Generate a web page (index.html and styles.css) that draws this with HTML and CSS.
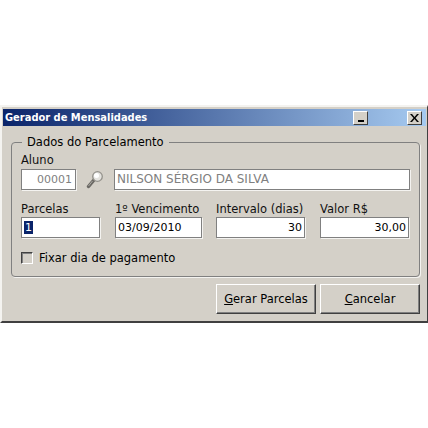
FILE: index.html
```html
<html>
    <head>
        <title>Gerador de Mensalidades</title>
        <link rel="stylesheet" href="styles.css">
    </head>
    <body>
        <div class="window">
            <div class="titlebar">
                <span class="title">Gerador de Mensalidades</span>
                <span class="winbtn minimize"><svg width="8" height="8" viewBox="0 0 8 8"><rect x="1" y="6" width="6" height="2" fill="#000"/></svg></span>
                <span class="winbtn close"><svg width="9" height="8" viewBox="0 0 9 8"><path d="M0 0h2l2.500 3 2.500-3h2l-3.500 4 3.500 4h-2l-2.500-3-2.500 3h-2l3.500-4z" fill="#000"/></svg></span>
            </div>
            <div class="content">
                <fieldset class="group">
                    <legend>Dados do Parcelamento</legend>
                    <div class="label">Aluno</div>
                    <div class="row-aluno">
                        <div class="input code disabled">00001</div>
                        <svg class="lupa" width="20" height="20" viewBox="0 0 20 20">
                            <path d="M3.500 16.500l5-6" stroke="#6a6864" stroke-width="3.500" stroke-linecap="round"/>
                            <path d="M3.500 16l4-5" stroke="#aaa8a2" stroke-width="1"/>
                            <circle cx="12.500" cy="6.500" r="4.800" fill="#e4e3df" stroke="#94928c" stroke-width="1.300"/>
                            <circle cx="11.500" cy="5.500" r="2.500" fill="#fff"/>
                        </svg>
                        <div class="input name disabled">NILSON SÉRGIO DA SILVA</div>
                    </div>
                    <div class="row-campos">
                        <div class="campo parcelas">
                            <div class="label">Parcelas</div>
                            <div class="input left"><span class="selected">1</span></div>
                        </div>
                        <div class="campo vencimento">
                            <div class="label">1º Vencimento</div>
                            <div class="input left">03/09/2010</div>
                        </div>
                        <div class="campo intervalo">
                            <div class="label">Intervalo (dias)</div>
                            <div class="input">30</div>
                        </div>
                        <div class="campo valor">
                            <div class="label">Valor R$</div>
                            <div class="input">30,00</div>
                        </div>
                    </div>
                    <div class="check">
                        <span class="box"></span>
                        <span class="check-text">Fixar dia de pagamento</span>
                    </div>
                </fieldset>
                <div class="buttons">
                    <div class="button"><span><u>G</u>erar Parcelas</span></div>
                    <div class="button"><span><u>C</u>ancelar</span></div>
                </div>
            </div>
        </div>
    </body>
</html>
```

FILE: styles.css
```css
body {
    background: #fff;
    color: #000;
    font-family: "DejaVu Sans", sans-serif;
    font-size: 11px;
    margin: 0;
    padding-top: 105px;
}

.window {
    background: #d4d0c8;
    border-bottom: 2px solid #404040;
    border-left: 2px solid #f4f3f0;
    border-right: 1px solid #404040;
    border-top: 2px solid #f4f3f0;
    box-sizing: border-box;
    height: 218px;
    padding: 2px 1px 0 1px;
    width: 428px;
}

.titlebar {
    align-items: center;
    background: linear-gradient(to right, #0a246a, #a6caf0);
    color: #fff;
    display: flex;
    height: 17px;
}

.title {
    flex: 1;
    font-family: "DejaVu Sans Condensed", "DejaVu Sans", sans-serif;
    font-stretch: condensed;
    font-weight: bold;
    padding-left: 2px;
}

.winbtn {
    align-items: center;
    background: #d4d0c8;
    border: 1px solid;
    border-color: #fff #404040 #404040 #fff;
    box-sizing: border-box;
    display: flex;
    height: 14px;
    justify-content: center;
    width: 15px;
}

.minimize {
    margin-right: 39px;
}

.close {
    margin-right: 4px;
}

.content {
    padding: 9px 6px 0 8px;
}

.group {
    border: 1px solid #808080;
    border-radius: 4px;
    box-shadow: 1px 1px 0 #f4f3f0;
    box-sizing: border-box;
    height: 142px;
    margin: 0;
    padding: 4px 9px 0;
    width: 408px;
}

.group legend {
    font-size: 11.500px;
    margin-left: 1px;
    padding: 0 5px;
}

.label {
    color: #111;
    font-size: 11.500px;
    height: 14px;
    line-height: 14px;
}

.input {
    background: #fff;
    border: 1px solid #808080;
    box-shadow: 1px 1px 0 #f4f3f0;
    box-sizing: border-box;
    height: 21px;
    line-height: 19px;
    padding: 0 2px;
    text-align: right;
}

.left {
    text-align: left;
}

.disabled {
    color: #808080;
}

.row-aluno {
    align-items: center;
    display: flex;
    margin-top: 2px;
}

.code {
    padding-right: 3px;
    width: 55px;
}

.lupa {
    margin: 0 9px 0 9px;
}

.name {
    font-size: 12px;
    text-align: left;
    width: 296px;
}

.row-campos {
    display: flex;
    margin-top: 12px;
}

.row-campos .label {
    margin-bottom: 1px;
}

.parcelas {
    margin-right: 15px;
    width: 79px;
}

.vencimento {
    margin-right: 14px;
    width: 87px;
}

.intervalo {
    margin-right: 15px;
    width: 89px;
}

.valor {
    width: 89px;
}

.selected {
    background: #0a246a;
    color: #fff;
    padding: 0 1px;
}

.check {
    align-items: center;
    display: flex;
    margin-top: 13px;
}

.check-text {
    font-size: 11.500px;
}

.box {
    background: #d4d0c8;
    border: 1px solid;
    border-color: #404040 #fff #fff #404040;
    box-shadow: inset 1px 1px 0 #808080;
    box-sizing: border-box;
    height: 12px;
    margin-right: 6px;
    width: 12px;
}

.buttons {
    display: flex;
    font-size: 11.500px;
    gap: 4px;
    justify-content: flex-end;
    margin-top: 7px;
}

.button {
    align-items: center;
    border: 1px solid;
    border-color: #fff #404040 #404040 #fff;
    box-shadow: inset -1px -1px 0 #808080;
    box-sizing: border-box;
    display: flex;
    height: 30px;
    justify-content: center;
    width: 100px;
}
```
